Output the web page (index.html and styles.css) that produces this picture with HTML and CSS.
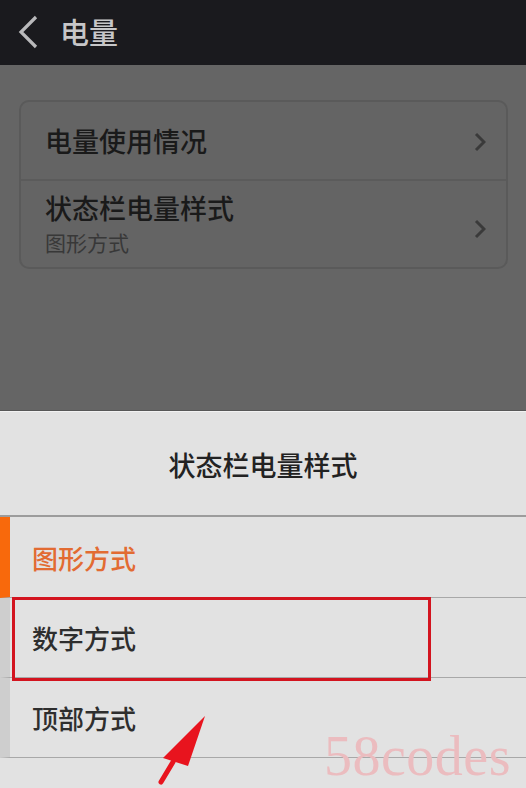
FILE: index.html
```html
<!DOCTYPE html>
<html lang="zh-CN">
<head>
    <meta charset="UTF-8">
    <meta name="viewport" content="width=device-width, initial-scale=1.0">
    <title>电量</title>
    <link rel="stylesheet" href="styles.css">
</head>
<body>
    <div class="topbar">
        <svg class="back" width="24" height="34" viewBox="0 0 24 34">
            <path d="M20 2 L5 17 L20 32" fill="none" stroke="#b9b9bb" stroke-width="3.2"/>
        </svg>
        <span class="topbar-title">电量</span>
    </div>

    <div class="page">
        <div class="card">
            <div class="card-row">
                <span class="card-title">电量使用情况</span>
                <svg class="arrow-right" width="12" height="20" viewBox="0 0 12 20">
                    <path d="M2 2 L10 10 L2 18" fill="none" stroke="#3a3a3a" stroke-width="3"/>
                </svg>
            </div>
            <div class="card-row tall">
                <div>
                    <div class="card-title">状态栏电量样式</div>
                    <div class="card-sub">图形方式</div>
                </div>
                <svg class="arrow-right" width="12" height="20" viewBox="0 0 12 20">
                    <path d="M2 2 L10 10 L2 18" fill="none" stroke="#3a3a3a" stroke-width="3"/>
                </svg>
            </div>
        </div>
    </div>

    <div class="sheet">
        <div class="sheet-title">状态栏电量样式</div>
        <div class="option selected">图形方式</div>
        <div class="option">数字方式</div>
        <div class="option">顶部方式</div>
        <div class="option last"></div>

        <div class="mark-box"></div>
        <svg class="mark-arrow" width="60" height="80" viewBox="0 0 60 80">
            <path d="M6 74 L18 54" stroke="#e8141e" stroke-width="5" stroke-linecap="round"/>
            <path d="M50 8 L8 50 L33 58 Z" fill="#e8141e"/>
        </svg>
        <div class="watermark">58codes</div>
    </div>
</body>
</html>
```

FILE: styles.css
```css
body {
    margin: 0;
    width: 526px;
    height: 788px;
    overflow: hidden;
    font-family: "Noto Sans CJK SC", "Noto Sans", sans-serif;
    background-color: #e2e2e2;
}
.topbar {
    height: 65px;
    background-color: #1a1a1e;
    display: flex;
    align-items: center;
    padding-left: 16px;
    box-sizing: border-box;
}
.back {
    margin-right: 20px;
    margin-top: -2px;
}
.topbar-title {
    font-size: 29px;
    font-weight: 500;
    color: #c6c6c8;
    margin-top: -3px;
}
.page {
    height: 345px;
    background-color: #656565;
    padding: 35px 18px 0 19px;
    box-sizing: border-box;
}
.card {
    border: 2px solid #5a5a5a;
    border-radius: 10px;
    background-color: #646464;
}
.card-row {
    height: 77px;
    display: flex;
    align-items: center;
    justify-content: space-between;
    padding: 0 20px 0 24px;
}
.card-row.tall {
    height: 86px;
    border-top: 2px solid #5b5b5b;
}
.card-row.tall .card-title {
    line-height: 28px;
}
.card-title {
    font-size: 27px;
    font-weight: 500;
    color: #1a1a1a;
    line-height: 1;
}
.card-sub {
    font-size: 21px;
    color: #383838;
    line-height: 24px;
    margin-top: 8px;
}
.arrow-right {
    margin-top: 2px;
}
.card-row.tall .arrow-right {
    margin-top: 10px;
}
.sheet {
    position: relative;
    border-top: 1px solid #575757;
    box-shadow: inset 0 1px 0 #f2f2f2;
}
.sheet-title {
    height: 106px;
    display: flex;
    align-items: center;
    justify-content: center;
    font-size: 27px;
    font-weight: 500;
    color: #222;
    border-bottom: 2px solid #9c9c9c;
    box-sizing: border-box;
    padding-top: 2px;
}
.option {
    height: 80px;
    display: flex;
    align-items: center;
    padding-left: 22px;
    font-size: 26px;
    font-weight: 500;
    color: #2e2e2e;
    border-left: 10px solid #cecece;
    border-bottom: 1px solid #a8a8a8;
    box-sizing: border-box;
}
.option.selected {
    color: #e26b32;
    border-left-color: #f8690c;
    height: 81px;
}
.option.last {
    height: 30px;
    border-left: none;
    border-bottom: none;
}
.mark-box {
    position: absolute;
    left: 12px;
    top: 186px;
    width: 419px;
    height: 84px;
    border: 3px solid #d3141f;
    box-sizing: border-box;
}
.mark-arrow {
    position: absolute;
    left: 155px;
    top: 297px;
}
.watermark {
    position: absolute;
    left: 324px;
    top: 317px;
    font-family: "Liberation Serif", serif;
    font-size: 56px;
    line-height: 1;
    color: #ebbcbf;
    letter-spacing: 0.5px;
}
```
